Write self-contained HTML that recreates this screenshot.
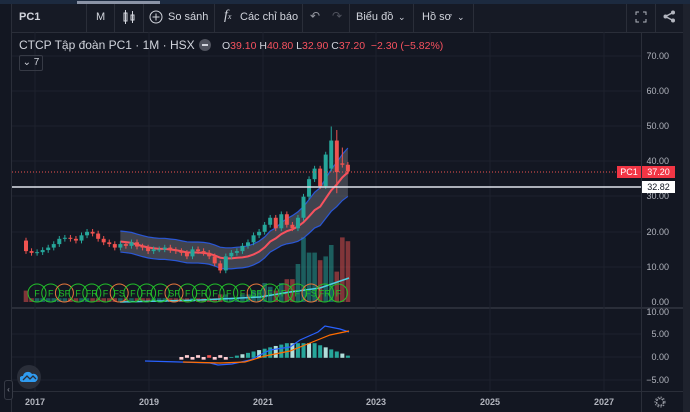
<!DOCTYPE html><html><head><meta charset="utf-8"><style>
body{margin:0;width:690px;height:412px;background:#131722;overflow:hidden;font-family:"Liberation Sans","Noto Sans CJK JP",sans-serif;color:#d1d4dc;position:relative}
.a{position:absolute}
.t{font-size:11px;color:#d1d4dc;top:11px}
.dv{position:absolute;top:4px;width:1px;height:28px;background:#2a2e39}
</style></head><body>
<div class="a" style="left:0;top:0;width:690px;height:4px;background:#1c2a3f"></div>
<div class="a" style="left:77px;top:1px;width:83px;height:3px;background:#8a93a6"></div>
<div class="a" style="left:0;top:4px;width:690px;height:28px;background:#161a25;border-bottom:1px solid #2a2e39"></div>
<div class="a" style="left:0;top:4px;width:11px;height:408px;background:#131722;border-right:1px solid #2a2e39"></div>
<div class="a" style="left:683px;top:4px;width:7px;height:408px;background:#1e222d"></div>
<div class="a t" style="left:19px;font-weight:bold">PC1</div>
<div class="dv" style="left:86px"></div><div class="a t" style="left:96px">M</div>
<div class="dv" style="left:114px"></div>
<svg class="a" style="left:122px;top:10px" width="14" height="14"><g stroke="#d1d4dc" fill="none"><rect x="2" y="3" width="3" height="8"/><line x1="3.5" y1="0" x2="3.5" y2="14"/><rect x="9" y="5" width="3" height="5"/><line x1="10.5" y1="1" x2="10.5" y2="13"/></g></svg>
<div class="dv" style="left:143px"></div>
<svg class="a" style="left:149px;top:10px" width="14" height="14"><circle cx="7" cy="7" r="6" stroke="#d1d4dc" fill="none"/><path d="M7 3.5v7M3.5 7h7" stroke="#d1d4dc"/></svg>
<div class="a t" style="left:168px">So sánh</div>
<div class="dv" style="left:214px"></div>
<div class="a" style="left:224px;top:8px;font-size:14px;font-style:italic;font-family:'Liberation Serif',serif">f<span style="font-size:8px">x</span></div>
<div class="a t" style="left:240px">Các chỉ báo</div>
<div class="dv" style="left:302px"></div>
<div class="a" style="left:310px;top:9px;font-size:12px;color:#9598a1">↶</div>
<div class="a" style="left:332px;top:9px;font-size:12px;color:#50535e">↷</div>
<div class="dv" style="left:349px"></div>
<div class="a t" style="left:356px">Biểu đồ</div><div class="a t" style="left:398px;font-size:9px;top:12px">⌄</div>
<div class="dv" style="left:413px"></div>
<div class="a t" style="left:422px">Hồ sơ</div><div class="a t" style="left:457px;font-size:9px;top:12px">⌄</div>
<div class="dv" style="left:473px"></div>
<div class="dv" style="left:626px"></div>
<svg class="a" style="left:635px;top:11px" width="12" height="12"><path d="M1 4V1h3M8 1h3v3M11 8v3H8M4 11H1V8" stroke="#b2b5be" fill="none"/></svg>
<div class="dv" style="left:655px"></div>
<svg class="a" style="left:663px;top:10px" width="13" height="13"><circle cx="10" cy="2.5" r="2" fill="#b2b5be"/><circle cx="2.5" cy="6.5" r="2" fill="#b2b5be"/><circle cx="10" cy="10.5" r="2" fill="#b2b5be"/><path d="M10 2.5L2.5 6.5 10 10.5" stroke="#b2b5be" stroke-width="1.5" fill="none"/></svg>
<div class="a" style="left:641px;top:32px;width:1px;height:380px;background:#2a2e39"></div>
<div class="a" style="left:12px;top:307px;width:671px;height:2px;background:#2a2e39"></div>
<div class="a" style="left:12px;top:391px;width:671px;height:1px;background:#2a2e39"></div>
<svg id="ch" class="a" style="left:0;top:0" width="690" height="412"></svg>
<div class="a" style="left:19px;top:38px;font-size:12px;color:#d1d4dc">CTCP Tập đoàn PC1 · 1M · HSX</div>
<div class="a" style="left:199px;top:39px;width:12px;height:12px;border-radius:6px;background:#50535e"><div style="margin:5px 3px;width:6px;height:2px;background:#d1d4dc"></div></div>
<div class="a" style="left:222px;top:40px;font-size:10.5px;color:#f7525f"><span style="color:#d1d4dc">O</span>39.10 <span style="color:#d1d4dc">H</span>40.80 <span style="color:#d1d4dc">L</span>32.90 <span style="color:#d1d4dc">C</span>37.20 &nbsp;−2.30 (−5.82%)</div>
<div class="a" style="left:19px;top:55px;width:22px;height:14px;border:1px solid #363a45;border-radius:2px;font-size:10px;line-height:14px;text-align:center">⌄ 7</div>
<div class="a" style="left:617px;top:166px;width:24px;height:12px;background:#f23645;font-size:9px;line-height:12px;text-align:center;color:#fff">PC1</div>
<div class="a" style="left:642px;top:166px;width:33px;height:12px;background:#f23645;font-size:9px;line-height:12px;text-align:center;color:#fff">37.20</div>
<div class="a" style="left:642px;top:181px;width:33px;height:12px;background:#fff;font-size:9px;line-height:12px;text-align:center;color:#131722">32.82</div>
<div class="a" style="left:17px;top:365px;width:24px;height:24px;border-radius:12px;background:#2a2e39"></div>
<svg class="a" style="left:20px;top:370px" width="18" height="14"><path d="M2 12a3 3 0 0 1 1-6 5 5 0 0 1 9-2 4 4 0 0 1 3 8z" fill="#2f9bf0"/><path d="M3 10l4-4 3 3 3-3 3 3" stroke="#2a2e39" stroke-width="1.3" fill="none"/></svg>
<div class="a" style="left:4px;top:380px;width:7px;height:18px;border:1px solid #363a45;border-radius:3px;background:#131722;font-size:8px;line-height:18px;text-align:center;color:#9598a1">‹</div>
<svg class="a" style="left:654px;top:396px" width="12" height="12"><circle cx="6" cy="6" r="3.5" stroke="#9598a1" stroke-width="1.5" fill="none" stroke-dasharray="2 1"/><circle cx="6" cy="6" r="5" stroke="#9598a1" stroke-dasharray="1.5 1.5" fill="none"/></svg>
<script>
var s='',X0=26,dx=5.55;
function py(p){return 302-3.51*p}
function my(v){return 357-4.6*v}
[56,91,126,161,196,232,267].forEach(function(y){s+='<line x1="12" y1="'+y+'" x2="641" y2="'+y+'" stroke="#1e222d"/>'});
[334,357,380].forEach(function(y){s+='<line x1="12" y1="'+y+'" x2="641" y2="'+y+'" stroke="#1e222d"/>'});
[35,149,263,376,490,604].forEach(function(x){s+='<line x1="'+x+'" y1="32" x2="'+x+'" y2="391" stroke="#1e222d"/>'});
var C=[14.5,14,14.2,14.8,15.5,16.5,18,18.3,18,17.5,19,20,19.5,18,17,16.5,15.5,16.5,16,17,15.8,15.5,14.5,15,15,15.5,14.8,14.5,14,13,15,14.5,14,13,11,9,13,14,14.5,16,17,19,20,22,24,21,25,22,21,24,30,35,38,33,42,46,37,39.1,37.2];
var O=[17.5];for(var i=1;i<C.length;i++)O.push(C[i-1]);O[55]=38;O[56]=46;O[57]=39.5;
var n=C.length,mid=[];
for(i=0;i<n;i++){var a=0,k=0;for(var j=Math.max(0,i-8);j<=i;j++){a+=C[j];k++}mid.push(a/k)}
var V=[3,1,1,1,1,1,1,1,1,1,1,1,1,1,1,1,1,1,1,1,1,1,1,1,1,1,1,1,1,1,1,1,1,1,1,2,2,1,1,2,2,3,3,5,4,3,5,6,6,10,17,13,13,11,12,15,8,17,16];
for(i=0;i<n;i++){var x=X0+i*dx,up=C[i]>=O[i];var h=V[i]*3.8;s+='<rect x="'+(x-2.3)+'" y="'+(302-h)+'" width="4.6" height="'+h+'" fill="'+(up?'#26a69a':'#ef5350')+'" opacity="0.5"/>'}
var up1='',lo1='',md='';var st=17;
for(i=st;i<n;i++){var x=X0+i*dx,w=3+(i>45?(i-45)*0.3:0);var m=mid[i]-0.5;up1+=(i==st?'M':'L')+x+' '+py(m+w);md+=(i==st?'M':'L')+x+' '+py(m);}
for(i=n-1;i>=st;i--){var x=X0+i*dx,w2=3+(i>45?(i-45)*0.3:0);lo1+='L'+x+' '+py(mid[i]-0.5-w2)}
s+='<path d="'+up1+lo1+'Z" fill="#787b86" opacity="0.45"/>';
s+='<path d="'+up1+'" stroke="#2962ff" stroke-width="1.2" fill="none" opacity="0.8"/>';
s+='<path d="M'+lo1.slice(1)+'" stroke="#2962ff" stroke-width="1.2" fill="none" opacity="0.8"/>';
s+='<path d="'+md+'" stroke="#f7525f" stroke-width="2" fill="none"/>';
s+='<path d="M120 302 L200 300 L260 297 L290 292 L320 288 L349 278" stroke="#4dd0e1" stroke-width="1.5" fill="none"/>';
for(i=0;i<n;i++){var x=X0+i*dx,o=O[i],c=C[i],upc=c>=o,col=upc?'#26a69a':'#ef5350';var hi=Math.max(o,c)+0.8,lw=Math.min(o,c)-0.8;if(i==55)hi=50;if(i==56){hi=49;lw=31}if(i==57)hi=44;
s+='<line x1="'+x+'" y1="'+py(hi)+'" x2="'+x+'" y2="'+py(lw)+'" stroke="'+col+'"/>';var t=py(Math.max(o,c)),b=py(Math.min(o,c));s+='<rect x="'+(x-2)+'" y="'+t+'" width="4" height="'+Math.max(1,b-t)+'" fill="'+col+'"/>'}
var L=['F','F','SF','F','FR','F','FS','F','FR','F','SF','F','FR','F','F','F','SF','F','F','F','FS','FR','F'];
for(i=0;i<L.length;i++){var x=37+i*13.7,org=L[i]=='SF'||L[i]=='FS';s+='<circle cx="'+x+'" cy="293" r="9" stroke="'+(org?'#e8783c':'#22c02a')+'" fill="none"/><text x="'+x+'" y="296.5" font-size="9" fill="#22c02a" text-anchor="middle" font-family="Liberation Sans">'+L[i]+'</text>'}
s+='<line x1="12" y1="172" x2="641" y2="172" stroke="#ef5350" stroke-dasharray="1 2"/>';
s+='<line x1="12" y1="187" x2="641" y2="187" stroke="#e0e3eb" stroke-width="1.5"/>';
for(i=28;i<n;i++){var x=X0+i*dx,v=i<37?0.4*(i%2?1:-1):Math.min(3,(i-37)*0.3);if(i>52)v=3-(i-52)*0.45;var col=i<37?(i==33?'#ef5350':'#ffcdd2'):(i%3==0?'#b2dfdb':'#26a69a');var y=my(Math.max(v,0)),h=Math.abs(v)*4.6+0.8;s+='<rect x="'+(x-2)+'" y="'+y+'" width="4" height="'+h+'" fill="'+col+'"/>'}
s+='<path d="M145 361 L180 362 L210 363 L218 365 L232 364 L250 360 L270 350 L290 347 L300 340 L318 332 L325 326 L340 329 L349 332" stroke="#2962ff" stroke-width="1.2" fill="none"/>';
s+='<path d="M183 362 L220 363 L245 362 L265 356 L290 351 L310 343 L330 335 L349 331" stroke="#ff6d00" stroke-width="1.2" fill="none"/>';
[[56,'70.00'],[91,'60.00'],[126,'50.00'],[161,'40.00'],[196,'30.00'],[232,'20.00'],[267,'10.00'],[302,'0.00'],[312,'10.00'],[334,'5.00'],[357,'0.00'],[380,'−5.00']].forEach(function(a){s+='<text x="669" y="'+(a[0]+3)+'" font-size="9" fill="#b2b5be" text-anchor="end" font-family="Liberation Sans">'+a[1]+'</text>'});
[[35,'2017'],[149,'2019'],[263,'2021'],[376,'2023'],[490,'2025'],[604,'2027']].forEach(function(a){s+='<text x="'+a[0]+'" y="405" font-size="9" font-weight="bold" fill="#b2b5be" text-anchor="middle" font-family="Liberation Sans">'+a[1]+'</text>'});
document.getElementById('ch').innerHTML=s;
</script>
</body></html>
